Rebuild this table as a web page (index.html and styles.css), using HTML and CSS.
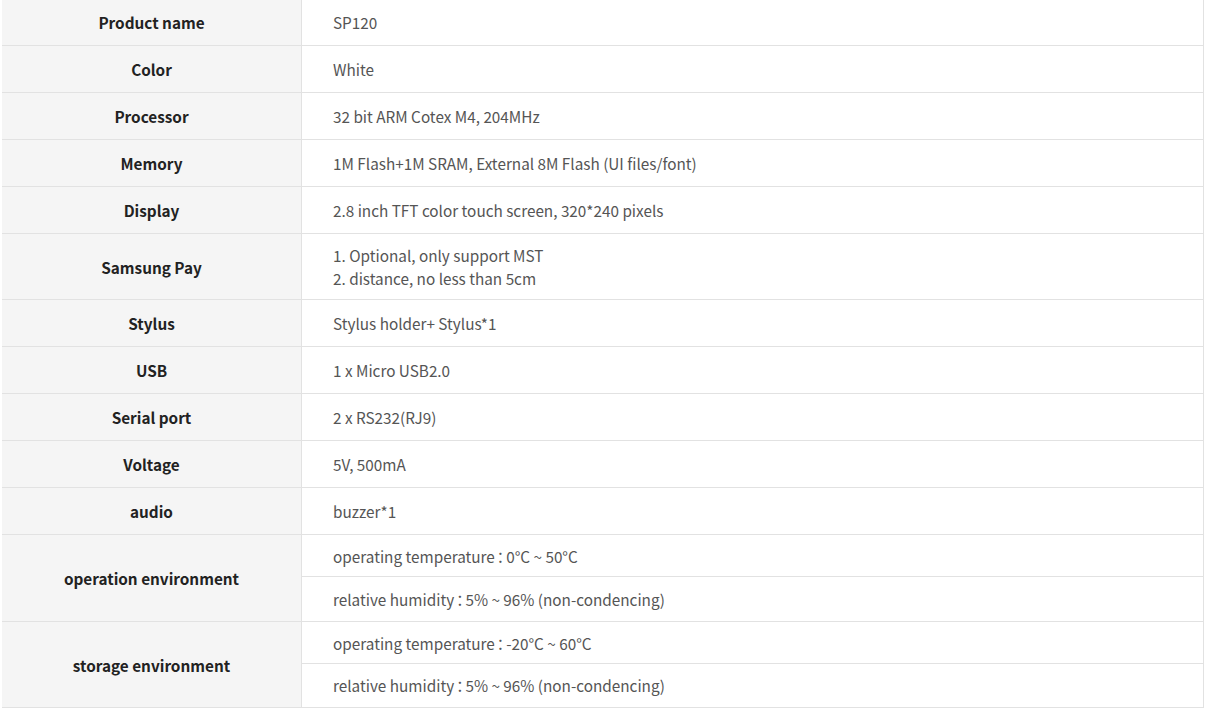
FILE: index.html
```html
<!DOCTYPE html>
<html lang="en">
<head>
<meta charset="utf-8">
<title>SP120 Specifications</title>
<link rel="stylesheet" href="styles.css">
</head>
<body>
<div class="spec">
  <div class="row r-first"><div class="label">Product name</div><div class="value">SP120</div></div>
  <div class="row"><div class="label">Color</div><div class="value">White</div></div>
  <div class="row"><div class="label">Processor</div><div class="value">32 bit ARM Cotex M4, 204MHz</div></div>
  <div class="row"><div class="label">Memory</div><div class="value">1M Flash+1M SRAM, External 8M Flash (UI files/font)</div></div>
  <div class="row"><div class="label">Display</div><div class="value">2.8 inch TFT color touch screen, 320*240 pixels</div></div>
  <div class="row r-tall"><div class="label">Samsung Pay</div><div class="value">1. Optional, only support MST<br>2. distance, no less than 5cm</div></div>
  <div class="row"><div class="label">Stylus</div><div class="value">Stylus holder+ Stylus*1</div></div>
  <div class="row"><div class="label">USB</div><div class="value">1 x Micro USB2.0</div></div>
  <div class="row"><div class="label">Serial port</div><div class="value">2 x RS232(RJ9)</div></div>
  <div class="row"><div class="label">Voltage</div><div class="value">5V, 500mA</div></div>
  <div class="row"><div class="label">audio</div><div class="value">buzzer*1</div></div>
  <div class="row r-group">
    <div class="label">operation environment</div>
    <div class="subs">
      <div class="sub s-a">operating temperature<span class="colon">：</span>0°C ~ 50°C</div>
      <div class="sub s-b">relative humidity<span class="colon">：</span>5% ~ 96% (non-condencing)</div>
    </div>
  </div>
  <div class="row r-group">
    <div class="label">storage environment</div>
    <div class="subs">
      <div class="sub s-a">operating temperature<span class="colon">：</span>-20°C ~ 60°C</div>
      <div class="sub s-c">relative humidity<span class="colon">：</span>5% ~ 96% (non-condencing)</div>
    </div>
  </div>
</div>
</body>
</html>
```
FILE: styles.css
```css
html, body {
  margin: 0;
  padding: 0;
  background: #ffffff;
}

body {
  font-family: "Noto Sans CJK KR", "Noto Sans", sans-serif;
  font-size: 15.3px;
  line-height: 23px;
}

.spec {
  margin-left: 2px;
  width: 1201px;
  border-right: 1px solid #e2e2e2;
}

.row {
  display: flex;
  height: 46px;
  border-bottom: 1px solid #e2e2e2;
}

.row.r-first {
  height: 45px;
}

.row.r-tall {
  height: 65px;
}

.row.r-group {
  height: 86px;
}

.row.r-group:last-child {
  height: 85px;
}

.label {
  width: 300px;
  flex: 0 0 300px;
  background: #f5f5f5;
  border-right: 1px solid #e2e2e2;
  display: flex;
  align-items: center;
  justify-content: center;
  font-weight: 700;
  color: #222222;
  padding-top: 1px;
  box-sizing: border-box;
}

.row.r-first .label,
.row.r-first .value {
  padding-top: 0;
}

.value {
  flex: 1;
  display: flex;
  flex-direction: column;
  justify-content: center;
  padding: 1px 30px 0 31px;
  color: #555555;
}

.subs {
  flex: 1;
  display: flex;
  flex-direction: column;
}

.sub {
  display: flex;
  align-items: center;
  padding: 1px 30px 0 31px;
  color: #555555;
  height: 42px;
  box-sizing: border-box;
}

.colon {
  margin: 0 -2px;
}

.sub.s-a {
  border-bottom: 1px solid #e2e2e2;
}

.sub.s-b {
  height: 43px;
}
```
